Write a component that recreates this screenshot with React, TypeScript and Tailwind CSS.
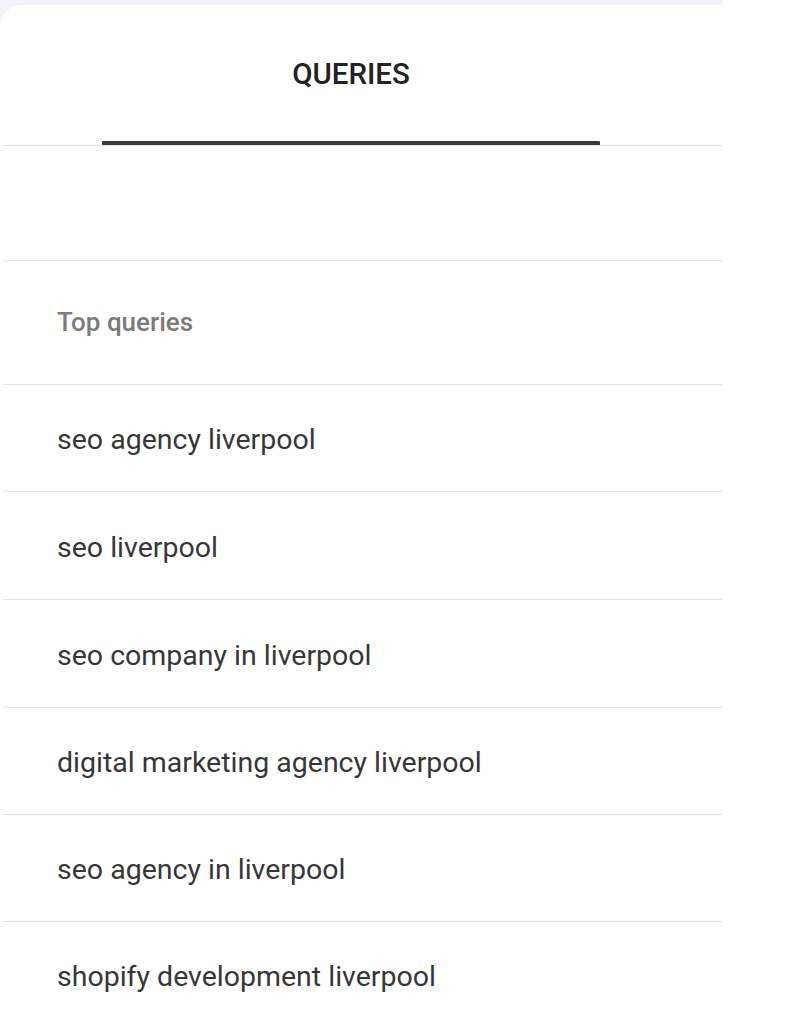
import React from 'react';

const QUERIES = [
  { text: 'seo agency liverpool', h: 'h-[107px]' },
  { text: 'seo liverpool', h: 'h-[108px]' },
  { text: 'seo company in liverpool', h: 'h-[108px]' },
  { text: 'digital marketing agency liverpool', h: 'h-[107px]' },
  { text: 'seo agency in liverpool', h: 'h-[107px]' },
  { text: 'shopify development liverpool', h: 'h-[107px]' },
];

export default function App() {
  return (
    <div className="min-h-screen bg-white" style={{ fontFamily: 'Roboto, "Noto Sans", sans-serif' }}>
      <div className="w-[723px] bg-[#f1f4f8] pt-[5px]">
        <div className="bg-white rounded-tl-[22px] pl-[3px]">
          {/* Tab header */}
          <div className="h-[141px] border-b border-[#e3e3e3] flex">
            <div className="ml-[99px] w-[498px] flex flex-col items-center justify-end">
              <div className="flex-1 flex items-center pt-[2px] text-[29.5px] font-medium text-[#222222]">
                QUERIES
              </div>
              <div className="h-[4px] w-full bg-[#3a3a3a] rounded-t-[1px]" />
            </div>
          </div>

          {/* Empty filter area */}
          <div className="h-[115px] border-b border-[#e3e3e3]" />

          {/* Section label */}
          <div className="h-[124px] border-b border-[#e3e3e3] flex items-center pl-[54px]">
            <span className="text-[26px] font-medium text-[#7b7b7b]">Top queries</span>
          </div>

          {QUERIES.map((q) => (
            <div key={q.text} className={`${q.h} border-b border-[#e3e3e3] flex items-center pl-[54px] pt-[5px]`}>
              <span className="text-[28.5px] text-[#373737]">{q.text}</span>
            </div>
          ))}
        </div>
      </div>
    </div>
  );
}
